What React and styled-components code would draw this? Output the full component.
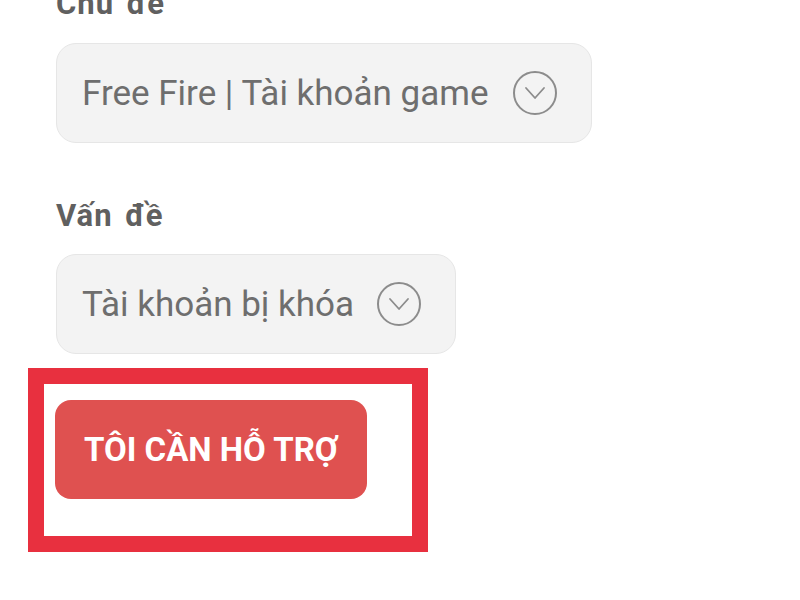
import React from 'react';
import styled, { createGlobalStyle } from 'styled-components';

const GlobalStyle = createGlobalStyle`
  html, body {
    margin: 0;
    padding: 0;
    background: #ffffff;
    overflow: hidden;
  }
  body {
    font-family: Roboto, "Noto Sans", "Liberation Sans", sans-serif;
  }
`;

const Page = styled.div`
  width: 800px;
  height: 600px;
  padding-left: 56px;
  box-sizing: border-box;
  display: flex;
  flex-direction: column;
  align-items: flex-start;
  overflow: hidden;
`;

const Label = styled.div`
  font-size: 31px;
  line-height: 32px;
  font-weight: 700;
  letter-spacing: 1px;
  word-spacing: 4px;
  color: #606060;
  margin-top: ${({ top }) => top}px;
  margin-bottom: ${({ bottom }) => bottom}px;
`;

const Select = styled.div`
  display: inline-flex;
  align-items: center;
  gap: ${({ gap }) => gap}px;
  height: 100px;
  box-sizing: border-box;
  padding: 0 33px 0 25px;
  background: #f3f3f3;
  border: 1.5px solid #e6e6e6;
  border-radius: 20px;
`;

const SelectText = styled.span`
  font-size: 35px;
  line-height: 41px;
  color: #6e6e6e;
  white-space: nowrap;
`;

const Highlight = styled.div`
  margin-top: 14px;
  margin-left: -28px;
  border: 16px solid #e8303f;
  padding: 16px 45px 37px 11px;
  background: #ffffff;
`;

const SupportButton = styled.button`
  width: 312px;
  height: 99px;
  border: none;
  border-radius: 16px;
  background: #df5150;
  color: #ffffff;
  font-family: Roboto, "Noto Sans", "Liberation Sans", sans-serif;
  font-size: 33px;
  font-weight: 700;
  padding: 0;
  display: flex;
  align-items: center;
  justify-content: center;
  cursor: pointer;
`;

const ChevronCircle = () => (
  <svg width="46" height="46" viewBox="0 0 46 46" fill="none">
    <circle cx="23" cy="23" r="21" stroke="#8c8c8c" strokeWidth="2" />
    <polyline
      points="14,18 23,28 32,18"
      stroke="#8c8c8c"
      strokeWidth="1.8"
      strokeLinecap="round"
      strokeLinejoin="round"
    />
  </svg>
);

export default function App() {
  return (
    <>
      <GlobalStyle />
      <Page>
        <Label top={-12} bottom={23}>Chủ đề</Label>
        <Select gap={23}>
          <SelectText>Free Fire | Tài khoản game</SelectText>
          <ChevronCircle />
        </Select>

        <Label top={57} bottom={22}>Vấn đề</Label>
        <Select gap={22}>
          <SelectText>Tài khoản bị khóa</SelectText>
          <ChevronCircle />
        </Select>

        <Highlight>
          <SupportButton>TÔI CẦN HỖ TRỢ</SupportButton>
        </Highlight>
      </Page>
    </>
  );
}
